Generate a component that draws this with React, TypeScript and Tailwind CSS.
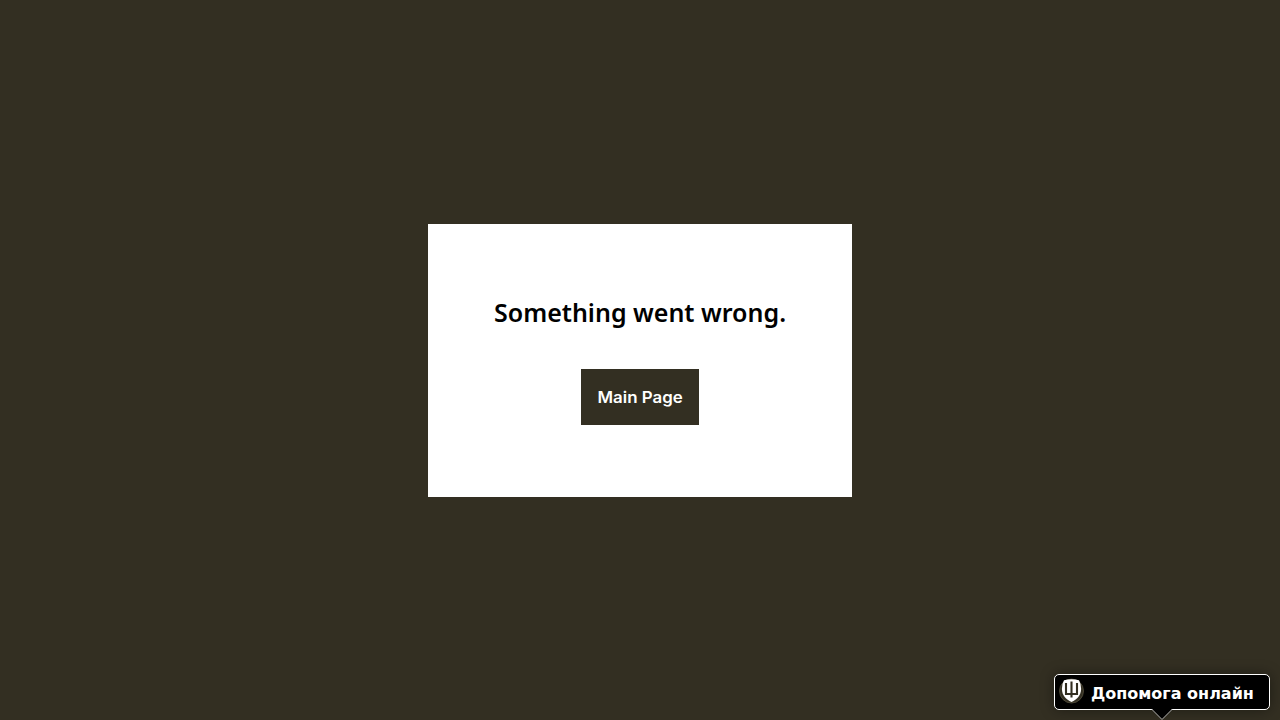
function Trident() {
  return (
    <svg viewBox="0 0 26 26" className="-mt-0.5 h-[26px] w-[26px] shrink-0" aria-hidden="true">
      <circle cx="13.5" cy="13" r="12" fill="#332f22" stroke="#57523f" strokeWidth="0.8" />
      <path d="M6 2.2 Q13.5 .4 21 2.2 Q23.2 6 23.1 11 C22.9 17.5 19 21.5 13.5 24 C8 21.5 4.1 17.5 3.9 11 Q3.8 6 6 2.2Z" fill="#fff" />
      <path d="M8 5V16H19V5" fill="none" stroke="#332f22" strokeWidth="2.1" />
      <path d="M13.5 3.5V19.5" fill="none" stroke="#332f22" strokeWidth="2.1" />
    </svg>
  );
}

export default function App() {
  return (
    <main className="relative flex h-screen w-full items-center justify-center overflow-hidden bg-[#332f22]">
      <section className="mt-px flex h-[273px] w-[424px] flex-col items-center bg-white pt-[72px]">
        <h1 className="h-[73px] whitespace-nowrap font-['Noto_Sans',sans-serif] text-[25px] font-semibold leading-[33px] text-black">
          Something went wrong.
        </h1>
        <button className="flex h-14 w-[118px] items-center justify-center whitespace-nowrap bg-[#332f22] pt-px font-['Inter',sans-serif] text-[15.5px] font-semibold text-white">
          <span className="inline-block scale-x-[1.09]">Main Page</span>
        </button>
      </section>
      <aside className="absolute right-[10px] bottom-[10px] flex h-9 w-[216px] items-center rounded-[5px] border border-white bg-black pl-[3px] shadow-[0_0_14px_rgba(0,0,0,0.4)]">
        <Trident />
        <span className="ml-[7px] mt-[3px] whitespace-nowrap font-['DejaVu_Sans',sans-serif] text-[16px] font-bold leading-5 text-white">
          Допомога онлайн
        </span>
        <svg viewBox="0 0 22 11" className="absolute top-[34px] left-[96px] h-[11px] w-[22px]" aria-hidden="true">
          <path d="M1 0L11 10L21 0Z" fill="#000" />
          <path d="M1 .5L11 10.5L21 .5" fill="none" stroke="#aaa" />
        </svg>
      </aside>
    </main>
  );
}
